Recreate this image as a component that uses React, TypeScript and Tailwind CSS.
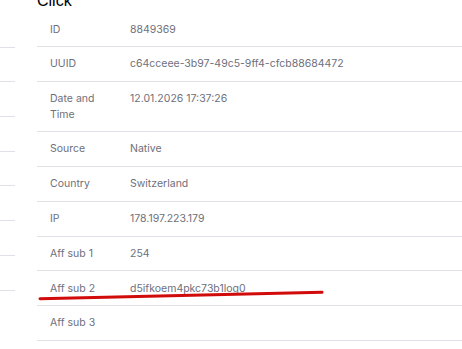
const rows: { label: string; value: string }[] = [
  { label: "ID", value: "8849369" },
  { label: "UUID", value: "c64cceee-3b97-49c5-9ff4-cfcb88684472" },
  { label: "Date and Time", value: "12.01.2026 17:37:26" },
  { label: "Source", value: "Native" },
  { label: "Country", value: "Switzerland" },
  { label: "IP", value: "178.197.223.179" },
  { label: "Aff sub 1", value: "254" },
  { label: "Aff sub 2", value: "d5ifkoem4pkc73b1log0" },
  { label: "Aff sub 3", value: "" },
]

export default function App() {
  return (
    <div className="relative w-[462px] h-[349px] overflow-hidden bg-white flex">
      {/* left table, cut off by the viewport */}
      <div className="w-[15px] pt-[13px] shrink-0">
        {Array.from({ length: 8 }).map((_, i) => (
          <div key={i} className="h-[34.7px] border-b border-[#e0e0e6]" />
        ))}
      </div>

      <div className="ml-[22px] flex-1">
        <h3 className="-mt-[8px] mb-[2.5px] text-[16px] leading-[18px] text-black font-['Liberation_Sans',Arial,sans-serif]">
          Click
        </h3>
        <table className="w-full border-collapse font-['Inter',sans-serif] text-[10.5px] leading-[15.4px]">
          <tbody>
            {rows.map((r) => (
              <tr key={r.label} className="border-b border-[#e0e0e6]">
                <td className="w-[93px] pl-[13px] pr-[26px] py-[9.2px] align-top text-[#6e6f7c]">
                  {r.label}
                </td>
                <td className="pl-0 py-[9.2px] align-top text-[#6e6f7c]">{r.value}</td>
              </tr>
            ))}
          </tbody>
        </table>
      </div>

      {/* red annotation stroke */}
      <svg className="absolute inset-0 pointer-events-none" width="462" height="349">
        <path d="M40 298.8 L322 292.3" stroke="#d10a0a" strokeWidth="3" strokeLinecap="round" fill="none" />
      </svg>
    </div>
  )
}
